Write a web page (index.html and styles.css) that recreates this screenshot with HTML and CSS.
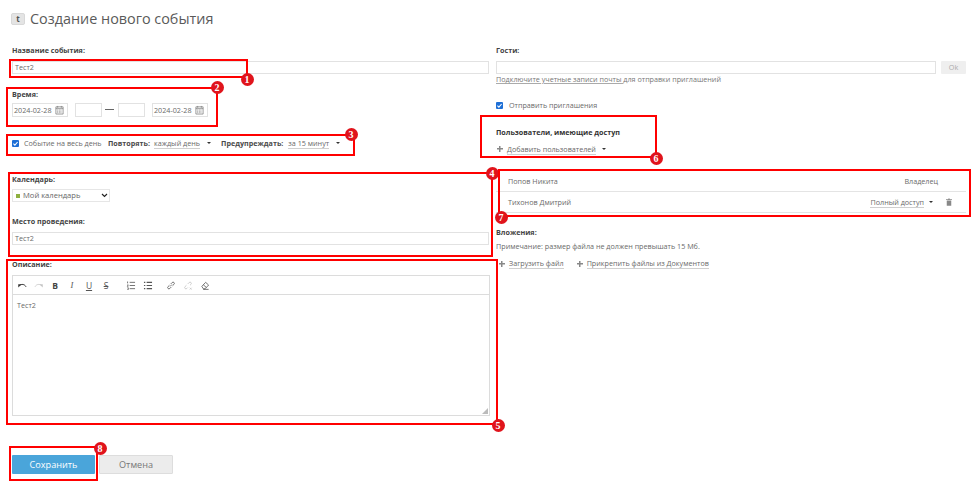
FILE: index.html
```html
<!DOCTYPE html>
<html lang="ru">
<head>
<meta charset="utf-8">
<title>Создание нового события</title>
<link rel="stylesheet" href="styles.css">
</head>
<body>
<main class="page">
  <header class="head">
    <span class="logo">t</span>
    <h1>Создание нового события</h1>
  </header>
  <div class="columns">
    <section class="col">
      <div class="label">Название события:</div>
      <div class="input">Тест2</div>
      <div class="label l-time">Время:</div>
      <div class="time-row">
        <div class="date"><span>2024-02-28</span>
          <svg viewBox="0 0 10 10" class="cal"><path d="M1 1.5h8v8H1zM1 3.5h8M3 .5v2M7 .5v2"/><path d="M2.5 5h5M2.5 6.5h5M2.5 8h5" stroke-dasharray="1 .8"/></svg>
        </div>
        <div class="time"></div>
        <div class="dash"></div>
        <div class="time t2"></div>
        <div class="date d2"><span>2024-02-28</span>
          <svg viewBox="0 0 10 10" class="cal"><path d="M1 1.5h8v8H1zM1 3.5h8M3 .5v2M7 .5v2"/><path d="M2.5 5h5M2.5 6.5h5M2.5 8h5" stroke-dasharray="1 .8"/></svg>
        </div>
      </div>
      <div class="opts">
        <span class="check"><svg viewBox="0 0 8 8"><path d="M1.6 4.2l1.7 1.7 3.1-3.6"/></svg></span>
        <span class="all-day">Событие на весь день</span>
        <b class="o1">Повторять:</b><span class="dot">каждый день</span><i class="arrow a1"></i>
        <b class="o2">Предупреждать:</b><span class="dot">за 15 минут</span><i class="arrow a1"></i>
      </div>
      <div class="label l-cal">Календарь:</div>
      <div class="select"><i class="sq"></i><span>Мой календарь</span>
        <svg viewBox="0 0 8 6" class="chev"><path d="M1 1.2l3 3 3-3"/></svg>
      </div>
      <div class="label l-place">Место проведения:</div>
      <div class="input">Тест2</div>
      <div class="label l-desc">Описание:</div>
      <div class="editor">
        <div class="toolbar">
          <svg viewBox="0 0 12 10" class="ic dark"><path class="solid" d="M1.500 7.500V3.500h4z"/><path d="M3 5C5.500 3 9 3.200 10.800 6.500"/></svg>
          <svg viewBox="0 0 12 10" class="ic faint"><path class="solid" d="M10.500 7.500V3.500h-4z"/><path d="M9 5C6.500 3 3 3.200 1.200 6.500"/></svg>
          <b class="tb tb-b">B</b>
          <i class="tb tb-i">I</i>
          <span class="tb tb-u">U</span>
          <span class="tb tb-s">S</span>
          <svg viewBox="0 0 10 10" class="ic lst"><path d="M3.500 1.500H9.500M3.500 5H9.500M3.500 8.500H9.500M1.200.6v2M1 4.300h.9L1 6h1M1 7.500h1v2H1"/></svg>
          <svg viewBox="0 0 10 10" class="ic lst2"><path d="M3.500 1.500H9.500M3.500 5H9.500M3.500 8.500H9.500M.5 1.500h1.500M.5 5h1.500M.5 8.500h1.500" stroke-width="1.300"/></svg>
          <svg viewBox="0 0 10 10" class="ic lnk"><path d="M4 6l2-2M3.300 4.700L1.700 6.300a1.400 1.400 0 0 0 2 2l1.600-1.600M4.700 3.300l1.600-1.600a1.400 1.400 0 0 1 2 2L6.700 5.300"/></svg>
          <svg viewBox="0 0 10 10" class="ic faint unl"><path d="M3.300 4.700L1.700 6.300a1.400 1.400 0 0 0 2 2l1-1M4.700 3.300l1.600-1.600a1.400 1.400 0 0 1 2 2l-1 1M7 7.500l2 2M9 7.500l-2 2"/></svg>
          <svg viewBox="0 0 10 10" class="ic era"><path d="M1.500 6L5.700 1.500 9 4.500 5 8.700H3.200zM3.200 4.300L6.500 7.200M3 9.300h6"/></svg>
        </div>
        <div class="ed-body">Тест2<svg viewBox="0 0 6 6" class="grip"><path d="M6 0v6H0z"/></svg></div>
      </div>
      <div class="actions">
        <div class="btn save">Сохранить</div>
        <div class="btn cancel">Отмена</div>
      </div>
    </section>
    <section class="col right">
      <div class="label">Гости:</div>
      <div class="guest-row"><div class="input guest"></div><div class="ok">Ok</div></div>
      <div class="hint"><span class="link">Подключите учетные записи почты </span>для отправки приглашений</div>
      <div class="send"><span class="check"><svg viewBox="0 0 8 8"><path d="M1.600 4.200l1.700 1.700 3.100-3.600"/></svg></span><span class="send-t">Отправить приглашения</span></div>
      <div class="label l-users">Пользователи, имеющие доступ</div>
      <div class="add"><i class="plus"></i><span class="dot">Добавить пользователей</span><i class="arrow a2"></i></div>
      <div class="tbl">
        <div class="row"><span>Попов Никита</span><span class="owner">Владелец</span></div>
        <div class="row"><span>Тихонов Дмитрий</span>
          <span class="dot access">Полный доступ</span><i class="arrow a3"></i>
          <svg viewBox="0 0 8 10" class="trash"><path d="M1 3h6v7H1zM0 1.300h8V2.300H0zM3 .3h2v1H3z"/></svg>
        </div>
      </div>
      <div class="label l-att">Вложения:</div>
      <div class="note">Примечание: размер файла не должен превышать 15 Мб.</div>
      <div class="files"><i class="plus"></i><span class="dot">Загрузить файл</span><i class="plus p2"></i><span class="dot">Прикрепить файлы из Документов</span></div>
    </section>
  </div>

  <div class="mark m1"></div><span class="badge b1">1</span>
  <div class="mark m2"></div><span class="badge b2">2</span>
  <div class="mark m3"></div><span class="badge b3">3</span>
  <div class="mark m4"></div><span class="badge b4">4</span>
  <div class="mark m5"></div><span class="badge b5">5</span>
  <div class="mark m6"></div><span class="badge b6">6</span>
  <div class="mark m7"></div><span class="badge b7">7</span>
  <div class="mark m8"></div><span class="badge b8">8</span>
</main>
</body>
</html>
```
FILE: styles.css
```css
* { box-sizing: border-box; }
html, body { margin: 0; background: #fff; }
body { width: 973px; height: 491px; overflow: hidden; font: 7.2px/11px "Open Sans", sans-serif; color: #6a6a6a; }
.page { position: relative; height: 491px; padding: 11px 7px 0 12px; }
.head { display: flex; align-items: center; gap: 5px; margin-left: -1px; height: 16px; }
.logo { width: 14px; height: 12px; background: #e4e4e4; border: 1px solid #d8d8d8; border-radius: 2px; font: bold 8px/10px "Open Sans", sans-serif; color: #555; text-align: center; }
h1 { margin: 0; font: 400 14.4px/16px "Open Sans", sans-serif; color: #5a5a5a; }
.columns { display: grid; grid-template-columns: 477px 470px; column-gap: 7px; margin-top: 18px; }
.col { min-width: 0; }
.label { font-weight: 700; color: #444; font-size: 7.2px; line-height: 11px; height: 11px; }
.input { height: 13px; margin-top: 5px; border: 1px solid #e2e2e2; padding-left: 2px; line-height: 11px; font-size: 7.2px; background: #fff; }
.l-time { margin-top: 15px; }
.time-row { display: flex; margin-top: 3px; height: 14px; }
.date { width: 56px; border: 1px solid #e2e2e2; display: flex; align-items: center; justify-content: space-between; padding: 0 3px 0 1px; font-size: 7.2px; background: #fff; }
.cal { width: 9px; height: 10px; fill: none; stroke: #777; stroke-width: .8; }
.time { width: 27px; border: 1px solid #e2e2e2; margin-left: 7px; }
.dash { width: 9px; height: 1px; background: #666; margin: 6px 0 0 3px; }
.t2 { margin-left: 4px; }
.d2 { margin-left: 7px; }
.opts { display: flex; align-items: center; margin-top: 22px; height: 8px; }
.check { width: 7px; height: 7px; background: #1e6fd6; border-radius: 1px; display: block; flex: none; }
.check svg { display: block; fill: none; stroke: #fff; stroke-width: 1.2; }
.all-day { margin-left: 5px; width: 84px; flex: none; white-space: nowrap; }
b { font-weight: 700; color: #4a4a4a; font-size: 7.2px; white-space: nowrap; }
.dot { border-bottom: 1px solid #cfcfcf; line-height: 10px; white-space: nowrap; }
.o1 { margin-right: 4px; }
.o2 { margin: 0 5px 0 10px; }
.arrow { width: 0; height: 0; border: 2px solid transparent; border-top: 2.500px solid #333; border-bottom: 0; flex: none; display: inline-block; }
.a1 { margin-left: 7px; }
.l-cal { margin-top: 27px; }
.select { width: 98px; height: 13px; margin-top: 4px; border: 1px solid #e6e6e6; display: flex; align-items: center; padding-left: 3px; font-size: 7.6px; color: #666; }
.sq { width: 4px; height: 4px; background: #8fb040; margin-right: 3px; }
.chev { width: 7px; height: 5px; margin-left: auto; margin-right: 1px; fill: none; stroke: #222; stroke-width: 1.400; }
.l-place { margin-top: 14px; }
.l-place + .input { margin-top: 5px; }
.l-desc { margin-top: 14px; }
.editor { width: 478px; height: 141px; margin-top: 5px; border: 1px solid #dcdcdc; display: flex; flex-direction: column; }
.toolbar { height: 19px; border-bottom: 1px solid #dcdcdc; display: flex; align-items: center; padding-left: 4px; }
.ic { width: 10px; height: 9px; fill: none; stroke: #555; stroke-width: .9; flex: none; }
.ic.dark { stroke: #333; stroke-width: 1.200; }
.ic.faint { stroke: #c4c4c4; margin-left: 7px; }
.dark .solid { fill: #333; stroke: none; }
.faint .solid { fill: #c4c4c4; stroke: none; }
.tb { width: 8px; text-align: center; color: #555; font-size: 8.500px; flex: none; }
.tb-b { margin-left: 7px; color: #444; font-weight: 700; }
.tb-i { margin-left: 9px; font-family: "Liberation Serif", serif; }
.tb-u { margin-left: 9px; text-decoration: underline; }
.tb-s { margin-left: 9px; text-decoration: line-through; }
.lst { margin-left: 16px; }
.lst2 { margin-left: 7px; }
.lnk { margin-left: 13px; }
.unl { margin-left: 7px; }
.era { margin-left: 7px; }
.ed-body { position: relative; flex: 1; padding: 5px 0 0 4px; font-size: 7.2px; }
.grip { position: absolute; right: 1px; bottom: 1px; width: 6px; height: 6px; fill: #bbb; }
.actions { display: flex; gap: 4px; margin-top: 39px; }
.btn { width: 83px; height: 19px; border-radius: 1px; text-align: center; font-size: 9.100px; line-height: 19px; }
.save { background: #4aa5da; color: #fff; }
.cancel { width: 74px; background: #ececec; border: 1px solid #ddd; color: #777; line-height: 17px; }
.guest-row { display: flex; margin-top: 5px; gap: 5px; }
.guest { width: 440px; margin: 0; }
.ok { width: 25px; height: 13px; background: #efefef; text-align: center; color: #aaa; line-height: 13px; border-radius: 1px; }
.hint { margin-top: 0; height: 11px; line-height: 11px; color: #777; white-space: nowrap; }
.link { text-decoration: underline; text-decoration-color: #aaa; }
.send { display: flex; align-items: center; margin-top: 16px; height: 8px; }
.send-t { margin-left: 6px; }
.l-users { margin-top: 18px; color: #333; }
.add { display: flex; align-items: center; margin-top: 5px; height: 12px; padding-left: 1px; }
.plus { position: relative; width: 6px; height: 6px; flex: none; margin-right: 4px; background: linear-gradient(#888, #888) center / 6px 1.500px no-repeat, linear-gradient(#888, #888) center / 1.500px 6px no-repeat; }
.a2 { margin-left: 6px; }
.tbl { width: 470px; margin-top: 16px; }
.row { height: 21px; border-bottom: 1px solid #e4e4e4; display: flex; align-items: center; padding-left: 12px; }
.owner { margin-left: auto; margin-right: 28px; }
.access { margin-left: auto; }
.a3 { margin-left: 5px; }
.trash { width: 6px; height: 8px; fill: #888; margin: 0 14px 0 13px; }
.l-att { margin-top: 14px; }
.note { margin-top: 3px; height: 11px; white-space: nowrap; }
.files { display: flex; align-items: center; margin-top: 6px; height: 11px; padding-left: 3px; }
.p2 { margin-left: 13px; }

.mark { position: absolute; border: 2px solid #f00; }
.m1 { left: 9px; top: 59px; width: 239px; height: 19px; }
.m2 { left: 6px; top: 87px; width: 212px; height: 40px; }
.m3 { left: 6px; top: 134px; width: 349px; height: 22px; }
.m4 { left: 8px; top: 172px; width: 485px; height: 85px; }
.m5 { left: 6px; top: 259px; width: 492px; height: 166px; }
.m6 { left: 480px; top: 115px; width: 177px; height: 43px; }
.m7 { left: 498px; top: 169px; width: 473px; height: 48px; }
.m8 { left: 9px; top: 446px; width: 89px; height: 35px; }
.badge { position: absolute; width: 13px; height: 13px; margin: -6.500px 0 0 -6.500px; border-radius: 50%; background: #e0141c; color: #fff; font: 700 10px/13px "Liberation Serif", serif; text-align: center; }
.b1 { left: 247px; top: 79px; }
.b2 { left: 217px; top: 87px; }
.b3 { left: 351px; top: 134px; }
.b4 { left: 492px; top: 173px; }
.b5 { left: 498px; top: 425px; }
.b6 { left: 656px; top: 158px; }
.b7 { left: 501px; top: 217px; }
.b8 { left: 100px; top: 448px; }
```
